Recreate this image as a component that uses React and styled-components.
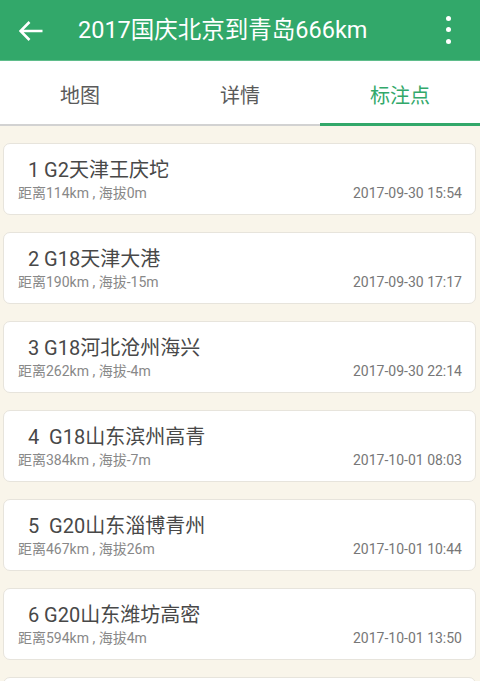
import React from 'react';
import styled, { createGlobalStyle } from 'styled-components';

const GREEN = '#32a86a';

const GlobalStyle = createGlobalStyle`
  html, body {
    margin: 0;
    padding: 0;
    background: #f9f5ea;
    font-family: Roboto, 'Noto Sans CJK SC', sans-serif;
  }
  * {
    box-sizing: border-box;
  }
`;

const points = [
  { title: '  1 G2天津王庆坨', dist: '距离114km , 海拔0m', time: '2017-09-30 15:54' },
  { title: '  2 G18天津大港', dist: '距离190km , 海拔-15m', time: '2017-09-30 17:17' },
  { title: '  3 G18河北沧州海兴', dist: '距离262km , 海拔-4m', time: '2017-09-30 22:14' },
  { title: '  4  G18山东滨州高青', dist: '距离384km , 海拔-7m', time: '2017-10-01 08:03' },
  { title: '  5  G20山东淄博青州', dist: '距离467km , 海拔26m', time: '2017-10-01 10:44' },
  { title: '  6 G20山东潍坊高密', dist: '距离594km , 海拔4m', time: '2017-10-01 13:50' },
];

const tabs = ['地图', '详情', '标注点'];

const App = () => {
  return (
    <Page>
      <GlobalStyle />
      <Header>
        <BackButton aria-label="back">
          <svg width="24" height="20" viewBox="0 0 24 20">
            <path
              d="M1.5 10 H23.5 M10.5 1 L1.5 10 L10.5 19"
              fill="none"
              stroke="#fff"
              strokeWidth="2.6"
            />
          </svg>
        </BackButton>
        <Title>2017国庆北京到青岛666km</Title>
        <MenuButton aria-label="more">
          <Dot />
          <Dot />
          <Dot />
        </MenuButton>
      </Header>

      <TabBar>
        {tabs.map((t, i) => (
          <Tab key={t} $active={i === 2}>
            {t}
          </Tab>
        ))}
      </TabBar>

      <List>
        {points.map((p) => (
          <Card key={p.title}>
            <PointTitle>{p.title}</PointTitle>
            <MetaRow>
              <span>{p.dist}</span>
              <Time>{p.time}</Time>
            </MetaRow>
          </Card>
        ))}
        {/* next card, only its top edge is on screen */}
        <Card />
      </List>
    </Page>
  );
};

const Page = styled.div`
  height: 100vh;
  overflow: hidden;
  background: #f9f5ea;
`;

const Header = styled.header`
  display: flex;
  align-items: center;
  height: 61px;
  background: ${GREEN};
  border-bottom: 1px solid #5fbd8b;
  padding: 0 0 0 19px;
`;

const BackButton = styled.div`
  display: flex;
  align-items: center;
  width: 24px;
  height: 20px;
  margin-top: 1px;
`;

const Title = styled.div`
  flex: 1;
  margin-left: 35px;
  color: #fff;
  font-size: 23.5px;
  line-height: 30px;
  white-space: nowrap;
`;

const MenuButton = styled.div`
  display: flex;
  flex-direction: column;
  align-items: center;
  gap: 6.5px;
  margin-right: 29px;
  margin-top: -1px;
`;

const Dot = styled.span`
  display: block;
  width: 5px;
  height: 5px;
  border-radius: 50%;
  background: #fff;
`;

const TabBar = styled.nav`
  display: flex;
  background: #fff;
`;

const Tab = styled.div`
  flex: 1;
  display: flex;
  align-items: center;
  justify-content: center;
  height: 65px;
  padding-top: ${(p) => (p.$active ? '4px' : '3px')};
  font-size: 20px;
  color: ${(p) => (p.$active ? GREEN : '#5a5a5a')};
  border-bottom: ${(p) => (p.$active ? `3px solid ${GREEN}` : '2px solid #d2d2d2')};
`;

const List = styled.div`
  padding: 17px 4px 0 3px;
`;

const Card = styled.div`
  height: 72px;
  margin-bottom: 17px;
  padding: 13px 13px 0 14px;
  background: #fff;
  border: 1px solid #e7e4dc;
  border-radius: 7px;
`;

const PointTitle = styled.div`
  font-size: 20px;
  line-height: 26px;
  color: #484848;
  white-space: pre;
`;

const MetaRow = styled.div`
  display: flex;
  justify-content: space-between;
  font-size: 14px;
  line-height: 18px;
  color: #888;
  margin-top: 1px;
`;

const Time = styled.span`
  color: #777;
`;

export default App;
